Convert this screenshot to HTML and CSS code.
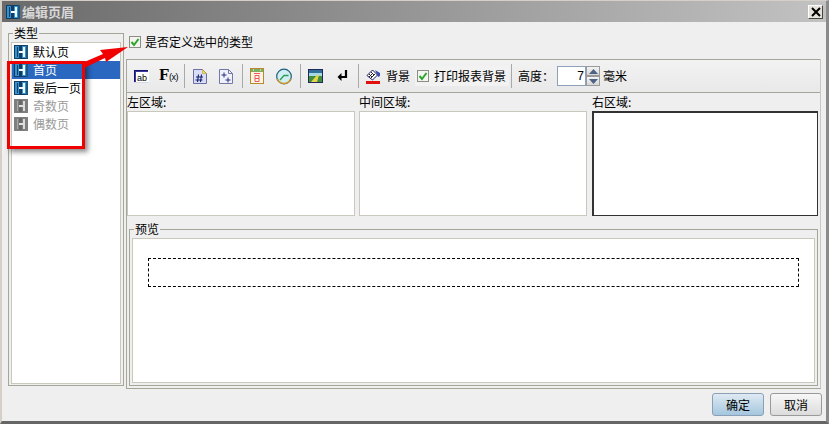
FILE: index.html
```html
<!DOCTYPE html>
<html lang="zh">
<head>
<meta charset="utf-8">
<title>编辑页眉</title>
<link rel="stylesheet" href="styles.css">
</head>
<body>
<svg width="0" height="0" class="defs">
  <symbol id="logo" viewBox="0 0 14 14">
    <rect width="14" height="14" fill="#123c60"/>
    <path d="M1 1h4v12H1z" fill="#2f93d6"/>
    <path d="M8 1h4v12H8z" fill="#2f93d6"/>
    <path d="M5 6h4v2H5z" fill="#f4f9fc"/>
    <path d="M9 2h2v10H9z" fill="#f4f9fc"/>
    <path d="M3 2h1v10H3z" fill="#123c60"/>
    <path d="M12 0h2v14h-2z" fill="#1d567f"/>
  </symbol>
  <symbol id="logo-off" viewBox="0 0 14 14">
    <rect width="14" height="14" fill="#7f7f7f"/>
    <path d="M5 1h3v5H5zM5 8h3v5H5z" fill="#6a6a6a"/>
    <path d="M5 6h4v2H5z" fill="#e2e2e2"/>
    <path d="M9 2h2v10H9z" fill="#dcdcdc"/>
    <path d="M3 2h1v10H3z" fill="#a9a9a9"/>
  </symbol>
  <symbol id="tick" viewBox="0 0 12 12">
    <path d="M2.500 6l2.500 3 4.500-6" fill="none" stroke="#2aa52a" stroke-width="2"/>
  </symbol>
</svg>
<div class="window">
  <header class="titlebar">
    <svg class="logo"><use href="#logo"/></svg>
    <span class="title">编辑页眉</span>
    <span class="close">
      <svg width="10" height="10" viewBox="0 0 10 10"><path d="M1 1l8 8M9 1l-8 8" stroke="#000" stroke-width="2"/></svg>
    </span>
  </header>
  <div class="content">
    <fieldset class="types">
      <legend>类型</legend>
      <ul class="list">
        <li class="item"><svg class="logo"><use href="#logo"/></svg>默认页</li>
        <li class="item selected"><svg class="logo"><use href="#logo"/></svg>首页</li>
        <li class="item"><svg class="logo"><use href="#logo"/></svg>最后一页</li>
        <li class="item off"><svg class="logo"><use href="#logo-off"/></svg>奇数页</li>
        <li class="item off"><svg class="logo"><use href="#logo-off"/></svg>偶数页</li>
      </ul>
    </fieldset>
    <div class="main">
      <label class="custom">
        <span class="check"><svg width="12" height="12"><use href="#tick"/></svg></span>是否定义选中的类型
      </label>
      <div class="panel">
        <div class="toolbar">
          <span class="tool w-ab">
            <svg width="15" height="13" viewBox="0 0 15 13"><rect width="15" height="13" fill="#fff"/><path d="M0 0h14v1H1v11H0z" fill="#14146e"/><path d="M1 1h13v1H2v10H1z" fill="#3a3a9a"/><rect x="0" y="12" width="15" height="1" fill="#d8d8e8"/><text x="3" y="10.500" class="ab">ab</text></svg>
          </span>
          <span class="tool w-fx"><span class="fx">F<small>(x)</small></span></span>
          <i class="sep"></i>
          <span class="tool w-doc">
            <svg width="14" height="15" viewBox="0 0 14 15"><path d="M.5.5h9l4 4v10H.5z" fill="#d9ddf6" stroke="#6b6fa3"/><path d="M9.500.5v4h4z" fill="#f2d65a" stroke="#b59a2a" stroke-width=".5"/><path d="M5.500 5.500l-1 7.500M8.500 5.500l-1 7.500M3 8h7M2.500 11h7" stroke="#14206e" stroke-width="1.100"/></svg>
          </span>
          <span class="tool w-doc w-doc-end">
            <svg width="14" height="15" viewBox="0 0 14 15"><path d="M.5.500h9l4 4v10H.5z" fill="#f0f1fb" stroke="#7478a8"/><path d="M9.500.5v4h4" fill="none" stroke="#7478a8"/><path d="M2.500 6h5M5 3.500v5M6.500 11h5M9 8.500v5" stroke="#25307c"/></svg>
          </span>
          <i class="sep"></i>
          <span class="tool w-cal">
            <svg width="14" height="16" viewBox="0 0 14 16"><rect x=".5" y=".5" width="13" height="15" fill="#fdf6e8" stroke="#b8892a"/><rect x="1" y="1" width="12" height="3" fill="#7fae62"/><path d="M3 2h1M10 2h1" stroke="#fff"/><path d="M4 5.500h6M5 7.500h4v6H5zM5 10.500h4" fill="none" stroke="#f05a5a"/></svg>
          </span>
          <span class="tool w-clock">
            <svg width="16" height="17" viewBox="0 0 16 17"><circle cx="8" cy="8.500" r="7.300" fill="#cfeef2" stroke="#1f5f7c" stroke-width="1.200"/><path d="M1.500 11a7 7 0 0 0 13 0" fill="none" stroke="#d69a2a" stroke-width="1.500"/><path d="M4 12l4-4.500h4.500" fill="none" stroke="#2f9a58" stroke-width="1.300"/></svg>
          </span>
          <i class="sep"></i>
          <span class="tool w-pic">
            <svg width="15" height="14" viewBox="0 0 15 14"><rect width="15" height="14" fill="#23285c"/><rect x="1" y="1" width="13" height="3" fill="#2f6f9a"/><rect x="1" y="4" width="13" height="3" fill="#a6d8e6"/><rect x="1" y="7" width="13" height="6" fill="#3f8f3c"/><path d="M3 13l6-7 2 0-2 7z" fill="#e8d44a"/></svg>
          </span>
          <span class="tool w-enter">
            <svg width="11" height="12" viewBox="0 0 11 12"><path d="M9 0v7H3" fill="none" stroke="#000" stroke-width="2.200"/><path d="M4.500 3v8L.5 7z" fill="#000"/></svg>
          </span>
          <i class="sep"></i>
          <span class="tool w-bg">
            <svg width="15" height="15" viewBox="0 0 15 15"><path d="M1 6.500l5.500-5.500 5 5-5 5z" fill="#fff" stroke="#1a1a5e"/><path d="M3 5l3 3M5 3l3 3M3 8l4-4M5 9l4-4" stroke="#222"/><path d="M9 1l5 3v3l-2 1z" fill="#3f4fa8"/><rect x="0" y="12" width="14" height="3" fill="#e01010"/></svg>
          </span>
          <span class="tb-text w-bgtext">背景</span>
          <span class="print-group">
            <span class="check tb-check"><svg width="12" height="12"><use href="#tick"/></svg></span>
            <span class="tb-text">打印报表背景</span>
          </span>
          <i class="sep sep-tight"></i>
          <span class="tb-text w-height">高度：</span>
          <span class="spin-input">7</span>
          <span class="spin">
            <span class="spin-btn"><svg width="9" height="5" viewBox="0 0 9 5"><path d="M4.500 0L9 5H0z" fill="#4d6185"/></svg></span>
            <span class="spin-btn"><svg width="9" height="5" viewBox="0 0 9 5"><path d="M4.500 5L9 0H0z" fill="#4d6185"/></svg></span>
          </span>
          <span class="tb-text">毫米</span>
        </div>
        <div class="zones">
          <div class="zone"><span class="zone-label">左区域:</span><div class="zone-box"></div></div>
          <div class="zone"><span class="zone-label">中间区域:</span><div class="zone-box"></div></div>
          <div class="zone zone-last"><span class="zone-label">右区域:</span><div class="zone-box active"></div></div>
        </div>
        <fieldset class="preview">
          <legend>预览</legend>
          <div class="preview-box"><div class="dashed"></div></div>
        </fieldset>
      </div>
    </div>
  </div>
  <footer class="footer">
    <button class="btn primary">确定</button>
    <button class="btn">取消</button>
  </footer>
  <div class="marker"></div>
  <svg class="arrow" width="56" height="34" viewBox="0 0 56 34">
    <path d="M4 23L25 14 22 10 50 7 28 22 27 18 6 28z" fill="#f00000"/>
  </svg>
</div>
</body>
</html>
```

FILE: styles.css
```css
* { box-sizing: border-box; }
html, body { margin: 0; padding: 0; }
body {
  width: 829px;
  height: 424px;
  overflow: hidden;
  font-family: "Noto Sans CJK SC", "Liberation Sans", sans-serif;
  font-size: 12px;
  color: #000;
}
.defs { display: block; height: 0; width: 0; }
.window {
  position: relative;
  width: 829px;
  height: 424px;
  display: flex;
  flex-direction: column;
  background: #efefef;
  border-left: 2px solid #d4d0c8;
  border-right: 3px solid #8b8b8b;
  border-bottom: 3px solid #666;
  border-top: 1px solid #d4d0c8;
}
.titlebar {
  height: 21px;
  flex: none;
  display: flex;
  align-items: center;
  padding: 0 3px 0 4px;
  background: linear-gradient(90deg, #6a6a6a, #c2c2c2);
}
.logo { width: 14px; height: 14px; flex: none; }
.title {
  margin-left: 2px;
  font-size: 13px;
  font-weight: 700;
  color: #d8d8d8;
  flex: 1;
}
.close {
  width: 15px;
  height: 14px;
  display: flex;
  align-items: center;
  justify-content: center;
  background: #e4e2da;
  border: 1px solid;
  border-color: #fff #444 #444 #fff;
}
.content {
  flex: 1;
  display: flex;
  padding: 4px 2px 0 6px;
  min-height: 0;
}
fieldset {
  margin: 0;
  padding: 0;
  min-width: 0;
  border: 1px solid #a5a598;
}
legend {
  padding: 0 1px;
  margin-left: 2px;
  line-height: 14px;
  font-size: 12px;
}
.types {
  width: 116px;
  height: 360px;
  padding: 2px;
  flex: none;
}
.list {
  list-style: none;
  margin: 0;
  padding: 0;
  height: 342px;
  background: #fff;
  border: 1px solid #c9c9bb;
}
.item {
  height: 18px;
  display: flex;
  align-items: center;
  gap: 5px;
  padding-left: 2px;
  line-height: 18px;
}
.item.selected { background: #2a67c0; color: #fff; }
.item.off { color: #9a9a9a; }
.main {
  flex: 1;
  min-width: 0;
  margin-left: 2px;
  display: flex;
  flex-direction: column;
}
.custom {
  height: 33px;
  display: flex;
  align-items: flex-start;
  gap: 4px;
  padding: 10px 0 0 3px;
  line-height: 12px;
  font-size: 12px;
}
.check {
  width: 12px;
  height: 12px;
  flex: none;
  display: inline-block;
  background: #f4f4f0;
  border: 1px solid #8d8d85;
  line-height: 0;
}
.check svg { margin: -1px; }
.panel {
  width: 695px;
  height: 330px;
  border-left: 1px solid #a5a598;
  border-bottom: 1px solid #a5a598;
  border-right: 1px solid #c8c8c0;
  display: flex;
  flex-direction: column;
}
.toolbar {
  height: 34px;
  flex: none;
  display: flex;
  align-items: center;
  padding-left: 7px;
  background: linear-gradient(#f2f2f2, #e9e9e9);
  border-top: 1px solid #a5a598;
  border-bottom: 1px solid #a5a598;
}
.tool { display: flex; justify-content: center; align-items: center; flex: none; height: 20px; }
.w-ab { width: 15px; margin-right: 11px; }
.w-fx { width: 17px; margin-right: 7px; }
.fx {
  font-family: "Liberation Serif", serif;
  font-weight: 700;
  font-size: 17px;
  line-height: 16px;
  letter-spacing: -.5px;
  white-space: nowrap;
}
.fx small { font-family: "Liberation Sans", sans-serif; font-size: 9px; font-weight: 400; }
.ab { font-family: "Liberation Sans", sans-serif; font-size: 9px; fill: #000; }
.sep { width: 1px; height: 24px; background: #a9a9a9; flex: none; }
.w-doc { width: 14px; margin-left: 8px; margin-right: 4px; }
.w-doc-end { margin-right: 9px; }
.w-cal { width: 14px; margin-left: 7px; margin-right: 12px; }
.w-clock { width: 16px; margin-right: 8px; }
.w-pic { width: 15px; margin-left: 7px; margin-right: 14px; }
.w-enter { width: 11px; margin-right: 10px; }
.w-bg { width: 15px; margin-left: 7px; margin-right: 5px; }
.tb-text { flex: none; line-height: 16px; font-size: 12px; }
.w-bgtext { margin-right: 5px; }
.print-group {
  flex: none;
  height: 20px;
  display: flex;
  align-items: center;
  gap: 5px;
  padding: 0 3px 0 2px;
  margin-right: 2px;
  background: #f2f2f2;
}
.sep-tight { margin-right: 6px; }
.w-height { width: 39px; }
.spin-input {
  width: 29px;
  height: 20px;
  background: #fff;
  border: 1px solid #8ea0ba;
  text-align: right;
  padding-right: 1px;
  line-height: 18px;
  font-family: "Liberation Sans", sans-serif;
}
.spin {
  width: 14px;
  height: 20px;
  margin-right: 3px;
  display: flex;
  flex-direction: column;
}
.spin-btn {
  flex: 1;
  display: flex;
  align-items: center;
  justify-content: center;
  background: linear-gradient(#f4f4f4, #d6d6d6);
  border: 1px solid #9a9a9a;
}
.zones {
  display: flex;
  gap: 4px;
  height: 123px;
  flex: none;
}
.zone { display: flex; flex-direction: column; width: 228px; }
.zone-last { width: 226px; margin-left: 1px; }
.zone-label { height: 18px; line-height: 18px; }
.zone-box { flex: 1; background: #fff; border: 1px solid #c9c9bb; }
.zone-box.active { border: 1px solid #333; border-width: 2px 1px 1px 2px; }
.preview {
  margin: 6px 2px 0 2px;
  flex: none;
  padding: 2px;
}
.preview-box {
  height: 145px;
  background: #fff;
  border: 1px solid #c9c9bb;
  padding: 19px 15px 0 15px;
}
.dashed { height: 29px; border: 1px dashed #000; }
.footer {
  flex: none;
  height: 30px;
  display: flex;
  justify-content: flex-end;
  gap: 6px;
  padding: 2px 4px 0 0;
}
.btn {
  width: 52px;
  height: 23px;
  padding: 0;
  font: inherit;
  border: 1px solid #9a9a9a;
  border-radius: 3px;
  background: linear-gradient(#f7f7f7, #dcdcdc);
  color: #000;
}
.btn.primary {
  border-color: #8aa0b4;
  background: linear-gradient(#dfeaf3, #a4c6de);
}
.marker {
  position: absolute;
  left: 5px;
  top: 60px;
  width: 78px;
  height: 88px;
  border: 3px solid #f00000;
  box-shadow: 3px 3px 5px rgba(0,0,0,.45);
}
.arrow {
  position: absolute;
  left: 76px;
  top: 39px;
}
```
